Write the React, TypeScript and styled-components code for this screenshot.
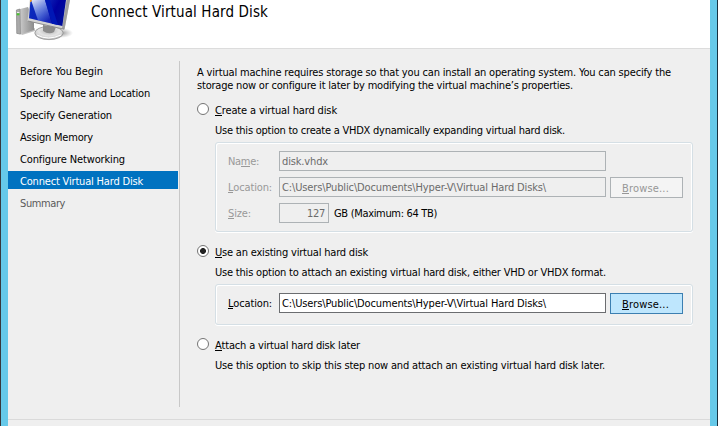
import React, { useLayoutEffect, useRef, useState } from "react";
import styled, { createGlobalStyle, css } from "styled-components";

const Global = createGlobalStyle`
  * { box-sizing: border-box; }
  html, body { margin: 0; padding: 0; overflow: hidden; }
  body {
    font-family: "DejaVu Sans Condensed", "DejaVu Sans", sans-serif;
    font-stretch: condensed;
    font-size: 11px;
    line-height: 13px;
    color: #000;
  }
`;

const Desktop = styled.div`
  width: 718px;
  height: 426px;
  background: #66c9e9;
  border-left: 1px solid #38383c;
  border-right: 1px solid #17303f;
  padding: 0 7px;
`;

const Dialog = styled.div`
  width: 702px;
  height: 426px;
  background: #efefef;
  display: flex;
  flex-direction: column;
`;

const Header = styled.header`
  height: 49px;
  flex: none;
  background: #fff;
  border-bottom: 1px solid #dcdcdc;
  display: flex;
  align-items: flex-start;
  gap: 12px;
`;

const Title = styled.h1`
  margin: 3px 0 0;
  font-size: 15px;
  line-height: 18px;
  font-weight: normal;
`;

const Body = styled.div`
  height: 371px;
  flex: none;
  display: flex;
  border-bottom: 1px solid #dadada;
`;

const Steps = styled.nav`
  width: 172px;
  height: 346px;
  margin-top: 12px;
  border-right: 1px solid #c8c8c8;
  display: flex;
  flex-direction: column;
  gap: 4px;
`;

const Step = styled.div<{ $state?: "current" | "pending" }>`
  height: 18px;
  width: 170px;
  padding: 4px 0 0 12px;
  color: ${(p) => (p.$state === "current" ? "#fff" : p.$state === "pending" ? "#5a5a5a" : "#000")};
  background: ${(p) => (p.$state === "current" ? "#0072c0" : "transparent")};
`;

const Page = styled.main`
  margin: 17px 0 0 17px;
  width: 498px;
`;

const Intro = styled.div`
  display: flex;
  flex-direction: column;
  align-items: flex-start;
  margin-bottom: 12px;
`;

const Option = styled.section<{ $gap?: number }>`
  display: grid;
  grid-template-columns: 12px 478px;
  column-gap: 6px;
  margin-bottom: ${(p) => p.$gap ?? 0}px;
`;

const Radio = styled.span<{ $checked?: boolean }>`
  width: 12px;
  height: 12px;
  margin-top: -1px;
  border: 1px solid #747474;
  border-radius: 50%;
  background: ${(p) => (p.$checked ? "radial-gradient(circle, #222 0 2.6px, #fff 3.3px)" : "#fff")};
`;

const OptionText = styled.div`
  grid-column: 2;
  height: 13px;
`;

const Description = styled(OptionText)`
  margin: 7px 0 5px;
`;

const Group = styled.div<{ $height: number }>`
  grid-column: 2;
  height: ${(p) => p.$height}px;
  border: 1px solid #d5dfe5;
  border-radius: 3px;
  box-shadow: inset 1px 1px 0 #fff, inset -1px 0 0 #fff, 0 1px 0 #fff;
  padding: 8px 0 0 11px;
  display: flex;
  flex-direction: column;
  gap: 6px;
`;

const Field = styled.div<{ $disabled?: boolean }>`
  height: 20px;
  display: grid;
  grid-template-columns: 52px auto auto;
  justify-content: start;
  align-items: start;
  color: ${(p) => (p.$disabled ? "#999" : "#000")};
`;

const FieldLabel = styled.label`
  padding: 4px 0 0 1px;
`;

const Input = styled.div<{ $disabled?: boolean; $short?: boolean }>`
  width: ${(p) => (p.$short ? 50 : 327)}px;
  height: 20px;
  padding: 3px 3px 0 2px;
  text-align: ${(p) => (p.$short ? "right" : "left")};
  border: 1px solid ${(p) => (p.$disabled ? "#adb2b5" : "#6b6d70")};
  background: ${(p) => (p.$disabled ? "#efefef" : "#fff")};
  color: ${(p) => (p.$disabled ? "#6b6b6b" : "#000")};
`;

const Unit = styled.span`
  padding: 4px 0 0 5px;
  color: #000;
`;

const Button = styled.button<{ $hot?: boolean }>`
  width: 73px;
  height: 21px;
  margin: 0 0 0 4px;
  padding: 2px 0 0 11px;
  text-align: left;
  font: inherit;
  border-radius: 0;
  ${(p) =>
    p.$hot
      ? css`
          border: 1px solid #3c7fb1;
          background: #bee6fd;
          color: #000;
        `
      : css`
          border: 1px solid #adb2b5;
          background: #f4f4f4;
          color: #979797;
        `}
`;

const Run = styled.span`
  display: inline-block;
  white-space: pre;
  vertical-align: top;
`;

const Mnemonic = styled.span`
  box-shadow: 0 -1px 0 currentColor inset;
  display: inline-block;
  height: 12px;
`;

/* Spreads the letter spacing so that a run of text takes the given width. */
function Text({ children, width, mnemonic }: { children: string; width: number; mnemonic?: string }) {
  const ref = useRef<HTMLSpanElement>(null);
  const [spacing, setSpacing] = useState(0);
  useLayoutEffect(() => {
    if (ref.current) setSpacing((width - ref.current.getBoundingClientRect().width) / children.length);
  }, [children, width]);
  const at = mnemonic ? children.indexOf(mnemonic) : -1;
  return (
    <Run ref={ref} style={{ letterSpacing: spacing }}>
      {at < 0 ? (
        children
      ) : (
        <>
          {children.slice(0, at)}
          <Mnemonic>{mnemonic}</Mnemonic>
          {children.slice(at + 1)}
        </>
      )}
    </Run>
  );
}

function ComputerIcon() {
  return (
    <svg width="71" height="42" viewBox="0 0 71 42">
      <defs>
        <linearGradient id="screen" x1="0" y1="0" x2="1" y2="0.35">
          <stop offset="0" stopColor="#0a2fc0" />
          <stop offset="0.45" stopColor="#0d22b8" />
          <stop offset="0.75" stopColor="#0000a0" />
          <stop offset="1" stopColor="#000d9c" />
        </linearGradient>
        <linearGradient id="glare" x1="0" y1="0" x2="0.6" y2="1">
          <stop offset="0" stopColor="#fff" stopOpacity="0.9" />
          <stop offset="1" stopColor="#5a8cf0" stopOpacity="0.25" />
        </linearGradient>
        <linearGradient id="metal" x1="0" y1="0" x2="1" y2="0">
          <stop offset="0" stopColor="#dedede" />
          <stop offset="0.5" stopColor="#b2b2b2" />
          <stop offset="1" stopColor="#8b8b8b" />
        </linearGradient>
        <radialGradient id="foot" cx="0.5" cy="0.35" r="0.6">
          <stop offset="0" stopColor="#b4b4b4" />
          <stop offset="0.6" stopColor="#e4e4e4" />
          <stop offset="1" stopColor="#c4c4c4" />
        </radialGradient>
        <radialGradient id="shade">
          <stop offset="0" stopColor="#777" stopOpacity="0.8" />
          <stop offset="1" stopColor="#999" stopOpacity="0" />
        </radialGradient>
      </defs>
      <ellipse cx="53" cy="33" rx="12" ry="5" fill="url(#shade)" />
      <path d="M12 33 L27 28 L27 31 L14 35Z" fill="#999" opacity="0.6" />
      <path d="M8 10 L20 7 L26 20 L26 30 L12 34.5 L8.3 33.5Z" fill="url(#metal)" />
      <path d="M8.4 10 L12 9 L12.5 34 L8.8 33.4Z" fill="#a9a9a9" stroke="#858585" strokeWidth="0.6" />
      <path d="M9 12.5h2.4" stroke="#eee" />
      <path d="M8.7 14.3h2.8" stroke="#48c52d" strokeWidth="2" />
      <ellipse cx="41" cy="33" rx="14.2" ry="6.6" fill="url(#foot)" stroke="#8f8f8f" strokeWidth="0.8" />
      <path d="M29 35 Q40 41 53 35" fill="none" stroke="#fff" strokeWidth="1" />
      <path d="M35 25 L48 27 L46 32 Q41 35 35 31Z" fill="#8b8b8b" />
      <path d="M21.8 0 L62 0 L56.5 29.5 L19.5 21Z" fill="#d3d3d3" />
      <path d="M58.6 0 L62 0 L56.5 29.5 L54 28.5Z" fill="#a0a0a0" />
      <path d="M20 21 L56 29.2" stroke="#858585" strokeWidth="0.9" />
      <path d="M22.5 0 L58 0 L54.3 26 L21 18.2Z" fill="url(#screen)" />
      <path d="M23 0 L37 0 L44 23.8 L30 20.3Z" fill="url(#glare)" />
      <path d="M37 0 L42 0 L50 25 L44 23.8Z" fill="#0017b5" />
      <path d="M22 0h2l-1 2h-1z" fill="#ee9b26" />
    </svg>
  );
}

const PATH = "C:\\Users\\Public\\Documents\\Hyper-V\\Virtual Hard Disks\\";

const STEPS: { name: string; width: number; state?: "current" | "pending" }[] = [
  { name: "Before You Begin", width: 83 },
  { name: "Specify Name and Location", width: 130 },
  { name: "Specify Generation", width: 92 },
  { name: "Assign Memory", width: 73 },
  { name: "Configure Networking", width: 105 },
  { name: "Connect Virtual Hard Disk", width: 123, state: "current" },
  { name: "Summary", width: 45, state: "pending" },
];

export default function App() {
  return (
    <>
      <Global />
      <Desktop>
        <Dialog>
          <Header>
            <ComputerIcon />
            <Title><Text width={177}>Connect Virtual Hard Disk</Text></Title>
          </Header>
          <Body>
            <Steps>
              {STEPS.map((s) => (
                <Step key={s.name} $state={s.state}>
                  <Text width={s.width}>{s.name}</Text>
                </Step>
              ))}
            </Steps>
            <Page>
              <Intro>
                <Text width={474}>A virtual machine requires storage so that you can install an operating system. You can specify the</Text>
                <Text width={376}>storage now or configure it later by modifying the virtual machine’s properties.</Text>
              </Intro>
              <Option $gap={14}>
                <Radio />
                <OptionText><Text width={122} mnemonic="C">Create a virtual hard disk</Text></OptionText>
                <Description><Text width={350}>Use this option to create a VHDX dynamically expanding virtual hard disk.</Text></Description>
                <Group $height={90}>
                  <Field $disabled>
                    <FieldLabel><Text width={31} mnemonic="m">Name:</Text></FieldLabel>
                    <Input $disabled><Text width={46}>disk.vhdx</Text></Input>
                  </Field>
                  <Field $disabled>
                    <FieldLabel><Text width={44} mnemonic="L">Location:</Text></FieldLabel>
                    <Input $disabled><Text width={264}>{PATH}</Text></Input>
                    <Button disabled><Text width={47} mnemonic="B">Browse...</Text></Button>
                  </Field>
                  <Field $disabled>
                    <FieldLabel><Text width={23} mnemonic="S">Size:</Text></FieldLabel>
                    <Input $disabled $short><Text width={18}>127</Text></Input>
                    <Unit><Text width={103}>GB (Maximum: 64 TB)</Text></Unit>
                  </Field>
                </Group>
              </Option>
              <Option $gap={14}>
                <Radio $checked />
                <OptionText><Text width={153} mnemonic="U">Use an existing virtual hard disk</Text></OptionText>
                <Description><Text width={391}>Use this option to attach an existing virtual hard disk, either VHD or VHDX format.</Text></Description>
                <Group $height={41}>
                  <Field>
                    <FieldLabel><Text width={44} mnemonic="L">Location:</Text></FieldLabel>
                    <Input><Text width={264}>{PATH}</Text></Input>
                    <Button $hot><Text width={47} mnemonic="B">Browse...</Text></Button>
                  </Field>
                </Group>
              </Option>
              <Option>
                <Radio />
                <OptionText><Text width={145} mnemonic="A">Attach a virtual hard disk later</Text></OptionText>
                <Description><Text width={390}>Use this option to skip this step now and attach an existing virtual hard disk later.</Text></Description>
              </Option>
            </Page>
          </Body>
        </Dialog>
      </Desktop>
    </>
  );
}
